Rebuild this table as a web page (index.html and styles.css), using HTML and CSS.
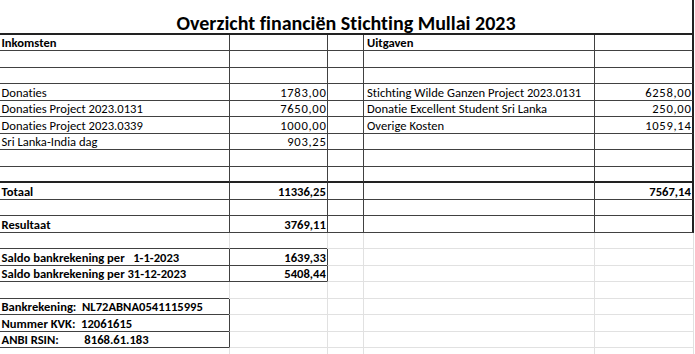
FILE: index.html
```html
<!DOCTYPE html>
<html lang="nl">
<head>
<meta charset="utf-8">
<title>Overzicht financiën Stichting Mullai 2023</title>
<link rel="stylesheet" href="styles.css">
</head>
<body>
<div class="sheet">
  <div class="title">Overzicht financiën Stichting Mullai 2023</div>

  <div class="row main">
    <div class="cell a bold">Inkomsten</div><div class="cell b"></div><div class="cell c"></div><div class="cell d bold">Uitgaven</div><div class="cell e"></div>
  </div>
  <div class="row main">
    <div class="cell a"></div><div class="cell b"></div><div class="cell c"></div><div class="cell d"></div><div class="cell e"></div>
  </div>
  <div class="row main">
    <div class="cell a"></div><div class="cell b"></div><div class="cell c"></div><div class="cell d"></div><div class="cell e"></div>
  </div>
  <div class="row main">
    <div class="cell a">Donaties</div><div class="cell b num"><span>1783,00</span></div><div class="cell c"></div><div class="cell d">Stichting Wilde Ganzen Project 2023.0131</div><div class="cell e num"><span>6258,00</span></div>
  </div>
  <div class="row main">
    <div class="cell a">Donaties Project 2023.0131</div><div class="cell b num"><span>7650,00</span></div><div class="cell c"></div><div class="cell d">Donatie Excellent Student Sri Lanka</div><div class="cell e num"><span>250,00</span></div>
  </div>
  <div class="row main">
    <div class="cell a">Donaties Project 2023.0339</div><div class="cell b num"><span>1000,00</span></div><div class="cell c"></div><div class="cell d">Overige Kosten</div><div class="cell e num"><span>1059,14</span></div>
  </div>
  <div class="row main">
    <div class="cell a">Sri Lanka-India dag</div><div class="cell b num"><span>903,25</span></div><div class="cell c"></div><div class="cell d"></div><div class="cell e"></div>
  </div>
  <div class="row main">
    <div class="cell a"></div><div class="cell b"></div><div class="cell c"></div><div class="cell d"></div><div class="cell e"></div>
  </div>
  <div class="row main before-total">
    <div class="cell a"></div><div class="cell b"></div><div class="cell c"></div><div class="cell d"></div><div class="cell e"></div>
  </div>
  <div class="row main">
    <div class="cell a bold">Totaal</div><div class="cell b num bold"><span>11336,25</span></div><div class="cell c"></div><div class="cell d"></div><div class="cell e num bold"><span>7567,14</span></div>
  </div>
  <div class="row main">
    <div class="cell a"></div><div class="cell b"></div><div class="cell c"></div><div class="cell d"></div><div class="cell e"></div>
  </div>
  <div class="row main">
    <div class="cell a bold">Resultaat</div><div class="cell b num bold"><span>3769,11</span></div><div class="cell c"></div><div class="cell d"></div><div class="cell e"></div>
  </div>

  <div class="row lower over-saldo">
    <div class="cell a"></div><div class="cell b"></div><div class="cell c"></div><div class="cell d"></div><div class="cell e"></div>
  </div>
  <div class="row lower saldo">
    <div class="cell a bold">Saldo bankrekening per   1-1-2023</div><div class="cell b num bold"><span>1639,33</span></div><div class="cell c"></div><div class="cell d"></div><div class="cell e"></div>
  </div>
  <div class="row lower saldo">
    <div class="cell a bold">Saldo bankrekening per 31-12-2023</div><div class="cell b num bold"><span>5408,44</span></div><div class="cell c"></div><div class="cell d"></div><div class="cell e"></div>
  </div>
  <div class="row lower over-bank">
    <div class="cell a"></div><div class="cell b"></div><div class="cell c"></div><div class="cell d"></div><div class="cell e"></div>
  </div>
  <div class="row lower bank">
    <div class="cell a bold">Bankrekening:  NL72ABNA0541115995</div><div class="cell b"></div><div class="cell c"></div><div class="cell d"></div><div class="cell e"></div>
  </div>
  <div class="row lower bank">
    <div class="cell a bold">Nummer KVK:  12061615</div><div class="cell b"></div><div class="cell c"></div><div class="cell d"></div><div class="cell e"></div>
  </div>
  <div class="row lower bank">
    <div class="cell a bold">ANBI RSIN:         8168.61.183</div><div class="cell b"></div><div class="cell c"></div><div class="cell d"></div><div class="cell e"></div>
  </div>
  <div class="row lower">
    <div class="cell a"></div><div class="cell b"></div><div class="cell c"></div><div class="cell d"></div><div class="cell e"></div>
  </div>
</div>
</body>
</html>
```
FILE: styles.css
```css
html, body {
  margin: 0;
  padding: 0;
  background: #ffffff;
  overflow: hidden;
}

.sheet {
  display: grid;
  grid-template-columns: 229px 98px 36px 231px 100px;
  grid-template-rows: 34.5px repeat(20, 16.5px);
  font-family: Carlito, Lato, "Liberation Sans", sans-serif;
  font-size: 12.6px;
  font-variant-ligatures: none;
  color: #000000;
}

.title {
  grid-column: 1 / -1;
  display: flex;
  align-items: flex-end;
  justify-content: center;
  font-size: 20px;
  font-weight: 700;
  line-height: 1;
  border-bottom: 2px solid #222222;
  border-right: 2px solid #222222;
}

.row {
  display: contents;
}

.cell {
  box-sizing: border-box;
  display: flex;
  align-items: flex-end;
  line-height: 1;
  white-space: pre;
  overflow: hidden;
  padding: 0 1px 0 3px;
  border-bottom: 1px solid transparent;
}

.cell.a {
  padding-left: 1.5px;
}

.bold {
  font-weight: 700;
}

.num {
  justify-content: flex-end;
  padding-right: 1.2px;
}

.num span {
  letter-spacing: 0.7px;
  margin-right: -0.7px;
}

.num.bold span {
  letter-spacing: 0;
  margin-right: 0;
}

/* main bordered table */
.main .cell {
  border-bottom: 1px solid #414141;
}

.main .b,
.main .c,
.main .d,
.main .e {
  border-left: 1px solid #414141;
}

.main .e {
  border-right: 2px solid #222222;
}

.main.before-total .cell {
  border-bottom: 2px solid #222222;
}

/* area below the table: light gridlines */
.lower .b,
.lower .c,
.lower .d,
.lower .e {
  border-left: 1px solid #e1e1e1;
  border-bottom: 1px solid #e1e1e1;
}

.lower .e {
  border-right: 1px solid #e1e1e1;
}

.over-saldo .a,
.over-saldo .b,
.saldo .a,
.saldo .b {
  border-bottom: 1px solid #414141;
}

.saldo .b,
.saldo .c {
  border-left: 1px solid #414141;
}

.over-bank .a,
.bank .a {
  border-bottom: 1px solid #414141;
}

.bank .b {
  border-left: 1px solid #414141;
}
```
